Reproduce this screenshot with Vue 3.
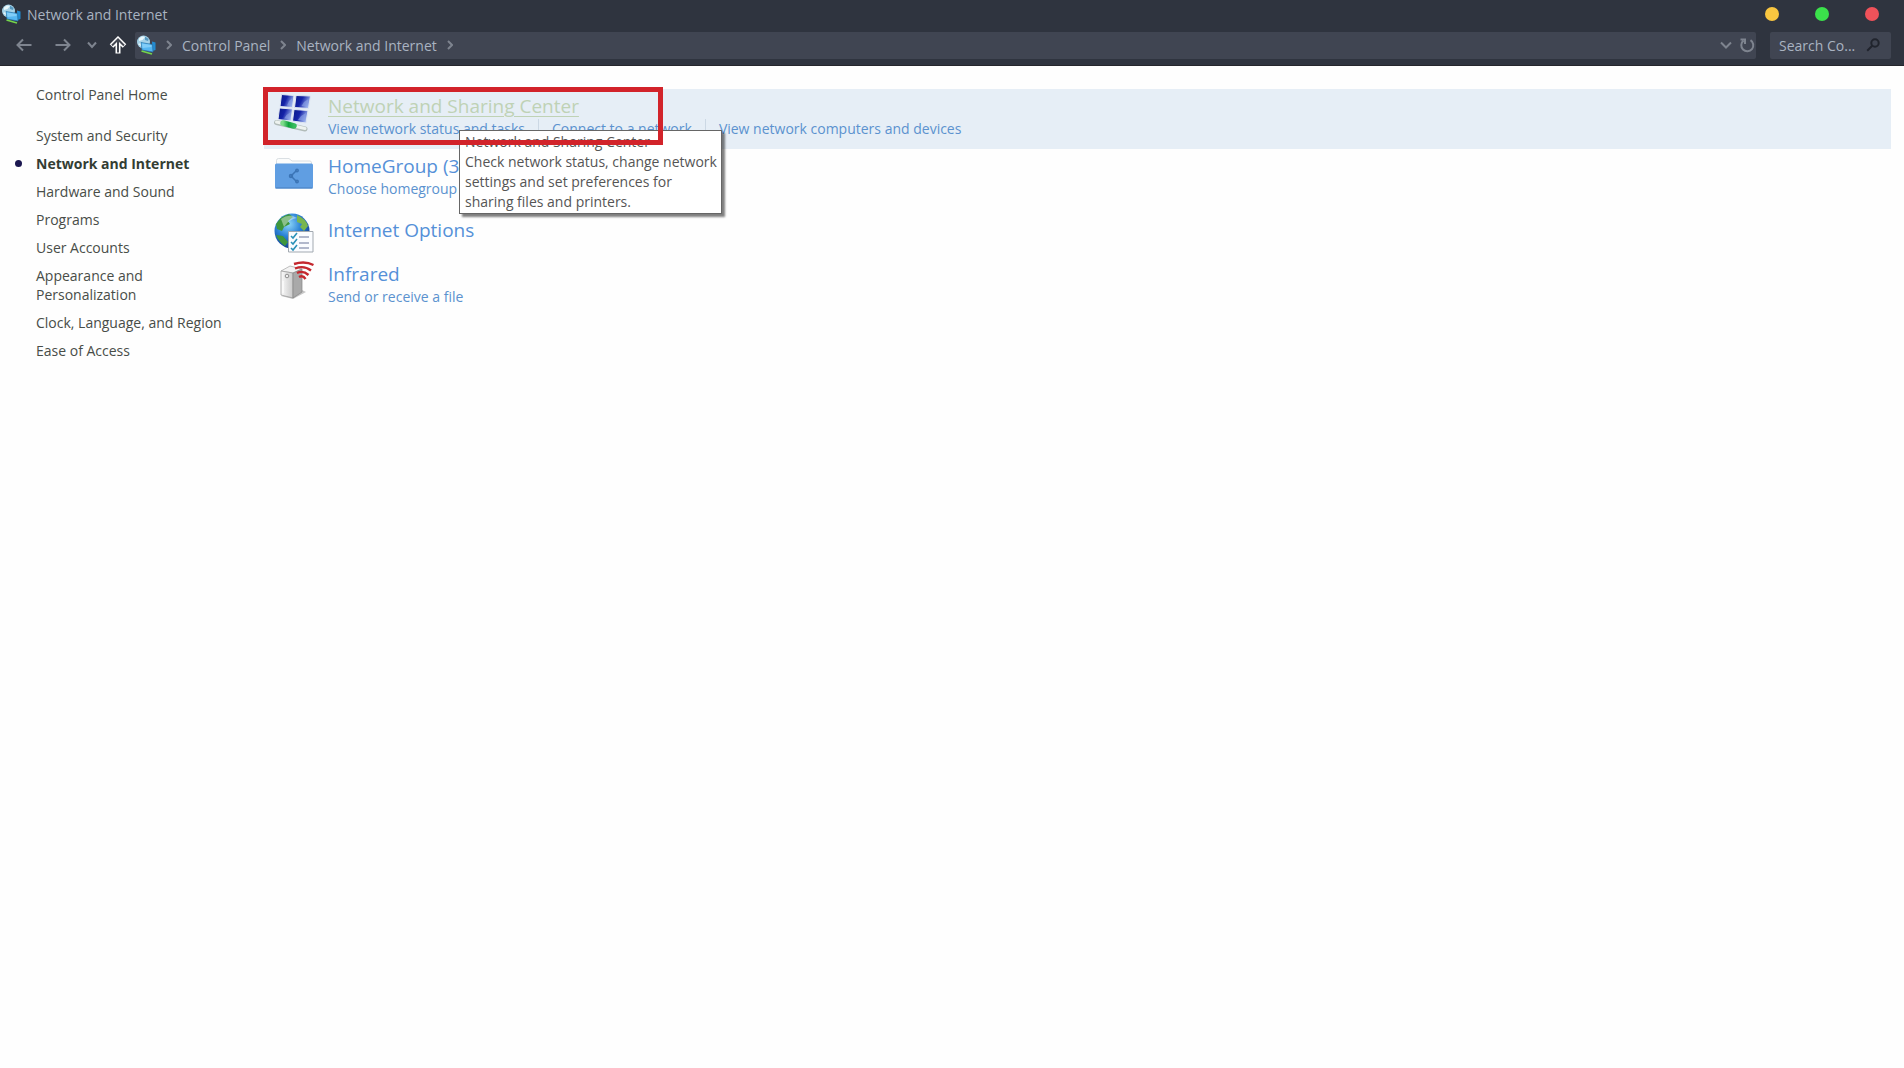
<template>
  <div class="window">
    <header class="chrome">
      <div class="title-bar">
        <svg class="net-icon" viewBox="0 0 20 20">
          <use href="#net-glyph" />
        </svg>
        <span class="title">Network and Internet</span>
        <div class="window-buttons">
          <button v-for="b in windowButtons" :key="b" :class="['dot', b]" :aria-label="b"></button>
        </div>
      </div>

      <div class="toolbar">
        <nav class="history">
          <button class="tool" aria-label="Back">
            <svg width="16" height="14" viewBox="0 0 16 14">
              <path d="M15.5 7H1.5M7 1.5L1.5 7L7 12.5" />
            </svg>
          </button>
          <button class="tool" aria-label="Forward">
            <svg width="16" height="14" viewBox="0 0 16 14">
              <path d="M0.5 7H14.5M9 1.5L14.5 7L9 12.5" />
            </svg>
          </button>
          <button class="tool small" aria-label="Recent">
            <svg width="10" height="8" viewBox="0 0 10 8">
              <path d="M1 1.5L5 6L9 1.5" />
            </svg>
          </button>
          <button class="tool" aria-label="Up">
            <svg width="18" height="18" viewBox="0 0 18 18">
              <path class="up-outline" d="M9 17.5V4M2.5 10L9 3.5L15.5 10" />
              <path class="up-core" d="M9 16.5V4.5M3 9.5L9 3.5L15 9.5" />
            </svg>
          </button>
        </nav>

        <div class="address">
          <svg class="net-icon" viewBox="0 0 20 20">
            <use href="#net-glyph" />
          </svg>
          <template v-for="crumb in crumbs" :key="crumb">
            <svg class="crumb-arrow" width="6" height="10" viewBox="0 0 6 10">
              <path d="M1 1L5 5L1 9" />
            </svg>
            <a href="#" class="crumb">{{ crumb }}</a>
          </template>
          <svg class="crumb-arrow" width="6" height="10" viewBox="0 0 6 10">
            <path d="M1 1L5 5L1 9" />
          </svg>
          <div class="address-tools">
            <button class="tool" aria-label="Previous locations">
              <svg width="12" height="8" viewBox="0 0 12 8">
                <path d="M1 1.5L6 6.5L11 1.5" />
              </svg>
            </button>
            <button class="tool" aria-label="Refresh">
              <svg width="15" height="16" viewBox="0 0 15 16">
                <path d="M10.5 3.2A6 6 0 1 1 3.5 3.6M0.5 2.5H5V7" />
              </svg>
            </button>
          </div>
        </div>

        <div class="search">
          <input type="text" placeholder="Search Co..." aria-label="Search Control Panel" />
          <svg width="14" height="14" viewBox="0 0 14 14">
            <circle cx="9" cy="5" r="3.7" />
            <path d="M6.2 7.8L1.2 12.8" />
          </svg>
        </div>
      </div>
    </header>

    <div class="content">
      <aside class="sidebar">
        <a href="#" class="home">Control Panel Home</a>
        <ul>
          <li v-for="item in sidebarItems" :key="item" :class="{ active: item === current }">
            <a href="#">{{ item }}</a>
          </li>
        </ul>
      </aside>

      <main class="categories">
        <section v-for="cat in categories" :key="cat.id" :class="['category', cat.id]">
          <svg class="cat-icon" viewBox="0 0 40 40">
            <use :href="'#' + cat.id + '-glyph'" />
          </svg>
          <div class="cat-text">
            <a href="#" class="cat-title">{{ cat.title }}</a>
            <div v-if="cat.tasks.length" class="tasks">
              <a v-for="task in cat.tasks" :key="task" href="#">{{ task }}</a>
            </div>
          </div>
          <template v-if="cat.tooltip">
            <div class="tooltip" role="tooltip">
              <div>{{ cat.title }}</div>
              <div>{{ cat.tooltip }}</div>
            </div>
            <div class="highlight-box"></div>
          </template>
        </section>
      </main>
    </div>

    <!-- Shared icon artwork -->
    <svg class="defs" width="0" height="0">
      <defs>
        <linearGradient id="screen" x1="0" y1="0" x2="1" y2="0.4">
          <stop offset="0" stop-color="#0a1a86" />
          <stop offset="0.5" stop-color="#1523a8" />
          <stop offset="1" stop-color="#9cb2ee" />
        </linearGradient>
        <linearGradient id="cable" x1="0" y1="0" x2="1" y2="0">
          <stop offset="0" stop-color="#7fdc8b" />
          <stop offset="0.5" stop-color="#0fa33c" />
          <stop offset="1" stop-color="#38bb5d" />
        </linearGradient>
        <radialGradient id="ocean" cx="0.4" cy="0.3" r="0.7">
          <stop offset="0" stop-color="#8fd8fa" />
          <stop offset="0.5" stop-color="#2c83d6" />
          <stop offset="1" stop-color="#123f92" />
        </radialGradient>
        <linearGradient id="tower" x1="0" y1="0" x2="1" y2="0">
          <stop offset="0" stop-color="#fafafa" />
          <stop offset="1" stop-color="#c9c9c9" />
        </linearGradient>

        <symbol id="net-glyph" viewBox="0 0 20 20">
          <circle cx="7.5" cy="7" r="6.5" fill="#a5d2e8" />
          <path d="M3 3.5C5 1 8 1 9 2L6.5 5L3 6ZM2 9L5 8L6 12Z" fill="#e9f7fb" />
          <path d="M9 1.5L12.5 4L12 6L9 5Z" fill="#5798bf" />
          <path d="M16 6.5L19.5 7.5V15L16.5 16Z" fill="#238bd1" />
          <path d="M5 7.5L16.5 9.5L17 17L6 15Z" fill="#55b6f1" stroke="#2474aa" stroke-width="0.7" />
          <path d="M6 8.5L15.5 10V12L6.5 13Z" fill="#81cdf8" />
          <path d="M5.5 16L16 19" stroke="#75d54c" stroke-width="1.7" />
        </symbol>

        <symbol id="sharing-glyph" viewBox="0 0 40 40">
          <g fill="url(#screen)" stroke="#dfe6f2" stroke-width="1">
            <path d="M7.500 1.500L20 2.500L18.500 14.500L6 13.500Z" />
            <path d="M22 2.500L36.500 3L34.500 15.500L20.500 14.500Z" />
            <path d="M5.500 15L18.500 16L17 28L4 26.500Z" />
            <path d="M20 16.500L34 17.500L32 30L18.500 28Z" />
          </g>
          <g fill="#8fa6e8" opacity="0.6">
            <path d="M15 8L18.500 5L17.500 13L13 12.500Z" />
            <path d="M30 9L34.500 6L33 14L27.500 13Z" />
            <path d="M12.500 22L17 19L15.500 26L10 25.500Z" />
            <path d="M27 23L32 20L30.500 28L24 27Z" />
          </g>
          <path d="M2.500 29.500L31 36" stroke="#b2bcb9" stroke-width="5" stroke-linecap="round" />
          <path d="M2.500 29L31 35.500" stroke="#edf2ef" stroke-width="3" stroke-linecap="round" />
          <path d="M9 30L20 33" stroke="url(#cable)" stroke-width="5.500" stroke-linecap="round" />
        </symbol>

        <symbol id="homegroup-glyph" viewBox="0 0 40 40">
          <path d="M2.5 11V7.5Q2.5 5.5 4.5 5.5H15L18 8H36Q37.5 8 37.5 10V14H2.5Z" fill="#fbfcfc" stroke="#d1d7dc" stroke-width="0.8" />
          <rect x="1" y="10.500" width="38" height="25" rx="1.500" fill="#609ee2" />
          <path d="M1.500 35H38.500" stroke="#467fc0" />
          <g fill="none" stroke="#3b74b6" stroke-width="1.500">
            <path d="M22.500 17.500L17 23L22.500 28.500" />
            <circle cx="23" cy="17.500" r="1.200" />
            <circle cx="17" cy="23" r="1.500" />
            <circle cx="23" cy="28.500" r="1.200" />
          </g>
        </symbol>

        <symbol id="internet-glyph" viewBox="0 0 40 40">
          <circle cx="18" cy="18" r="17.500" fill="url(#ocean)" />
          <path d="M2 11Q7 3 15 1L19 4L14 8L16 11L10 14L8 18L3 16Z" fill="#3f963c" />
          <path d="M23 2Q32 6 34 13L30 18L26 14L28 11L23 9Z" fill="#79b64e" />
          <path d="M2 22L9 23L14 29L11 33Q5 29 2 22Z" fill="#3f963c" />
          <path d="M7 6Q15 0 23 5Q15 6 10 14Z" fill="#fff" opacity="0.4" />
          <path d="M14.500 18.500H39V39H14.500Z" fill="#fafcff" stroke="#a2a9b0" />
          <path d="M17 23L19 25L23 20M17 29L19 31L23 26M17 35L19 37L23 32" fill="none" stroke="#2b91b8" stroke-width="1.600" />
          <path d="M25 24H35M25 30H35M25 35H35" stroke="#69759a" stroke-width="1.200" />
        </symbol>

        <symbol id="infrared-glyph" viewBox="0 0 40 40">
          <path d="M7 35L19 38L32 31L28 29Z" fill="#c6c6c6" />
          <path d="M7 10L16 5L28 8L19 12Z" fill="#f3f3f3" stroke="#a5a5a5" stroke-width="0.700" />
          <path d="M7 10L19 12V37L7 34Z" fill="url(#tower)" stroke="#979797" stroke-width="0.700" />
          <path d="M19 12L28 8V31L19 37Z" fill="#a9a9a9" stroke="#858585" stroke-width="0.700" />
          <circle cx="13" cy="15" r="1.800" fill="#eee" stroke="#777" stroke-width="0.800" />
          <path d="M9 20V32" stroke="#fff" />
          <g fill="none" stroke="#c4282e" stroke-width="2.400">
            <path d="M20 3Q31 -0.500 39.500 4" />
            <path d="M21 7.500Q30 4 37 9.500" />
            <path d="M23 12Q29 9 34.500 14" />
            <path d="M25 16Q29 14 31.500 18" />
          </g>
        </symbol>
      </defs>
    </svg>
  </div>
</template>

<script setup>
import { ref } from 'vue'

const windowButtons = ['minimize', 'maximize', 'close']
const crumbs = ['Control Panel', 'Network and Internet']

const current = ref('Network and Internet')
const sidebarItems = [
  'System and Security',
  'Network and Internet',
  'Hardware and Sound',
  'Programs',
  'User Accounts',
  'Appearance and Personalization',
  'Clock, Language, and Region',
  'Ease of Access'
]

const categories = [
  {
    id: 'sharing',
    title: 'Network and Sharing Center',
    tasks: [
      'View network status and tasks',
      'Connect to a network',
      'View network computers and devices'
    ],
    tooltip: 'Check network status, change network settings and set preferences for sharing files and printers.'
  },
  { id: 'homegroup', title: 'HomeGroup (3', tasks: ['Choose homegroup'] },
  { id: 'internet', title: 'Internet Options', tasks: [] },
  { id: 'infrared', title: 'Infrared', tasks: ['Send or receive a file'] }
]
</script>

<style>
body {
  margin: 0;
  background: #fefefe;
}
</style>

<style scoped>
.window {
  min-height: 100vh;
  font-family: 'Open Sans', 'Noto Sans', sans-serif;
  font-size: 14px;
  line-height: 19px;
  color: #484d48;
}

a {
  color: inherit;
  text-decoration: none;
}

button {
  padding: 0;
  border: 0;
  background: none;
}

.defs {
  position: absolute;
}

/* Window chrome */
.chrome {
  height: 66px;
  background: #2f343f;
  border-bottom: 1px solid #25262c;
  box-sizing: border-box;
  color: #a9b3c1;
}

.title-bar {
  display: flex;
  align-items: center;
  height: 28px;
  padding: 0 25px 0 1px;
}

.net-icon {
  width: 20px;
  height: 20px;
  flex-shrink: 0;
}

.title {
  margin-left: 6px;
}

.window-buttons {
  display: flex;
  gap: 36px;
  margin-left: auto;
}

.dot {
  width: 14px;
  height: 14px;
  border-radius: 50%;
}

.minimize {
  background: #f9c640;
}

.maximize {
  background: #3be24b;
}

.close {
  background: #f0525a;
}

.toolbar {
  display: flex;
  align-items: center;
  height: 34px;
  padding: 0 13px 0 16px;
}

.history {
  display: flex;
  align-items: center;
  gap: 19px;
  width: 119px;
}

.tool {
  display: flex;
  align-items: center;
}

.tool path {
  fill: none;
  stroke: #7e848f;
  stroke-width: 2;
}

.history .tool:nth-child(2) {
  margin-left: 4px;
}

.history .small {
  margin-right: -7px;
  margin-left: -3px;
}

.tool .up-outline {
  stroke: #fff;
  stroke-width: 5;
}

.tool .up-core {
  stroke: #444852;
  stroke-width: 2;
}

.address {
  display: flex;
  align-items: center;
  flex: 1;
  height: 27px;
  padding: 0 1px;
  border-radius: 2px;
  background: #404552;
  box-sizing: border-box;
}

.crumb-arrow {
  margin: 0 10px;
  fill: none;
  stroke: #7e848f;
  stroke-width: 2;
}

.address-tools {
  display: flex;
  align-items: center;
  gap: 8px;
  margin-left: auto;
}

.search {
  display: flex;
  align-items: center;
  width: 121px;
  height: 27px;
  margin-left: 14px;
  padding: 0 11px 0 9px;
  border-radius: 2px;
  background: #404552;
  box-sizing: border-box;
}

.search input {
  flex: 1;
  min-width: 0;
  padding: 0;
  border: 0;
  outline: 0;
  background: none;
  font: inherit;
  color: #a9b3c1;
}

.search input::placeholder {
  color: #a9b3c1;
  opacity: 1;
}

.search svg {
  flex-shrink: 0;
  fill: none;
  stroke: #20242d;
  stroke-width: 2;
}

/* Page */
.content {
  display: flex;
  padding: 23px 13px 0 0;
}

.sidebar {
  width: 264px;
  flex-shrink: 0;
  padding: 0 24px 0 36px;
  box-sizing: border-box;
}

.home {
  display: block;
  margin-top: -4px;
}

.sidebar ul {
  display: flex;
  flex-direction: column;
  gap: 9px;
  margin: 22px 0 0;
  padding: 0;
  list-style: none;
}

.sidebar li {
  position: relative;
}

.sidebar .active {
  font-weight: 700;
  color: #333d33;
}

.sidebar .active::before {
  content: '';
  position: absolute;
  left: -21px;
  top: 6px;
  width: 7px;
  height: 7px;
  border-radius: 50%;
  background: #1b1750;
}

.categories {
  flex: 1;
  min-width: 0;
}

.category {
  position: relative;
  display: flex;
  gap: 14px;
  height: 60px;
  padding: 4px 0 0 10px;
  box-sizing: border-box;
}

.sharing {
  z-index: 1;
  background: #e6eef6;
}

.category.internet {
  height: 48px;
}

.category.internet .cat-title {
  margin-top: 4px;
}

.category.infrared {
  height: 56px;
}

.cat-icon {
  width: 40px;
  height: 40px;
  flex-shrink: 0;
}

.cat-text {
  display: flex;
  flex-direction: column;
  align-items: flex-start;
}

.cat-title {
  font-size: 19px;
  line-height: 26px;
  color: #5590d8;
}

.sharing .cat-title {
  color: #bfd2b5;
  text-decoration: underline;
  text-decoration-thickness: 1px;
  text-underline-offset: 3px;
}

.tasks {
  display: flex;
  align-items: center;
  color: #5b92cf;
}

.tasks a + a {
  margin-left: 13px;
  padding-left: 13px;
  border-left: 1px solid #ccd8e4;
}

.tooltip {
  position: absolute;
  left: 195px;
  top: 41px;
  width: 263px;
  padding: 1px 4px 1px 5px;
  border: 1px solid #666;
  background: #fff;
  box-shadow: 3px 3px 2px rgba(0, 0, 0, 0.5);
  box-sizing: border-box;
  line-height: 20px;
  color: #555;
}

/* Red marker frame drawn over the row and its tooltip */
.highlight-box {
  position: absolute;
  left: -1px;
  top: -2px;
  width: 400px;
  height: 58px;
  border: 5px solid #d2232a;
  box-sizing: border-box;
}
</style>
